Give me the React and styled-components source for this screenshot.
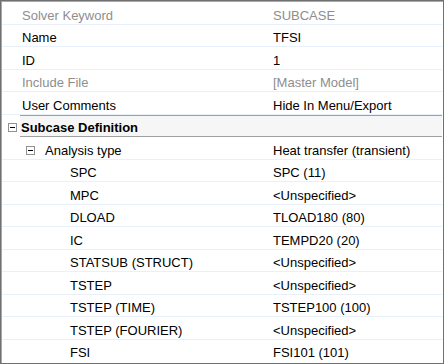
import styled, { createGlobalStyle } from "styled-components";

const Global = createGlobalStyle`
  html, body {
    margin: 0;
    padding: 0;
    background: #fff;
  }
  * {
    box-sizing: border-box;
  }
`;

const Panel = styled.div`
  width: 444px;
  height: 364px;
  border: 1px solid #707070;
  box-shadow: inset 1px 1px 0 #a8a8a8;
  padding: 1px 1px 0 1px;
  overflow: hidden;
  background: #fff;
  font-family: "Liberation Sans", Arial, sans-serif;
  font-size: 13px;
  color: #000;
`;

const Row = styled.div`
  display: grid;
  grid-template-columns: 270px 1fr;
  align-items: center;
  height: 22.5px;
  padding-top: 5px;
  border-bottom: 1px solid ${({ $last }) => ($last ? "transparent" : "#e8f1fb")};
  color: ${({ $muted }) => ($muted ? "#8e8e8e" : "#000")};
  white-space: nowrap;
`;

const Label = styled.div`
  display: flex;
  align-items: center;
  padding-left: ${({ $indent }) => $indent}px;
  gap: 10px;
`;

const Value = styled.div`
  padding-left: 1px;
`;

const SectionRow = styled.div`
  display: flex;
  align-items: center;
  height: 22.5px;
`;

const SectionToggle = styled.div`
  width: 18px;
  display: flex;
  justify-content: center;
  padding-left: 2px;
  padding-top: 3px;
`;

const SectionBar = styled.div`
  flex: 1;
  height: 100%;
  display: flex;
  align-items: center;
  padding: 4px 0 0 1px;
  border-top: 1px solid #a0a0a0;
  border-bottom: 1px solid #a0a0a0;
  background: #f6f6f6;
  font-weight: bold;
`;

const Minus = () => (
  <svg width="9" height="9" viewBox="0 0 9 9" style={{ display: "block" }}>
    <rect x="0.5" y="0.5" width="8" height="8" fill="#fff" stroke="#919191" />
    <line x1="2" y1="4.5" x2="7" y2="4.5" stroke="#000" />
  </svg>
);

const topRows = [
  { label: "Solver Keyword", value: "SUBCASE", muted: true },
  { label: "Name", value: "TFSI" },
  { label: "ID", value: "1" },
  { label: "Include File", value: "[Master Model]", muted: true },
  { label: "User Comments", value: "Hide In Menu/Export" },
];

const childRows = [
  ["SPC", "SPC (11)"],
  ["MPC", "<Unspecified>"],
  ["DLOAD", "TLOAD180 (80)"],
  ["IC", "TEMPD20 (20)"],
  ["STATSUB (STRUCT)", "<Unspecified>"],
  ["TSTEP", "<Unspecified>"],
  ["TSTEP (TIME)", "TSTEP100 (100)"],
  ["TSTEP (FOURIER)", "<Unspecified>"],
  ["FSI", "FSI101 (101)"],
];

export default function App() {
  return (
    <>
      <Global />
      <Panel>
        {topRows.map((r) => (
          <Row key={r.label} $muted={r.muted}>
            <Label $indent={20}>{r.label}</Label>
            <Value>{r.value}</Value>
          </Row>
        ))}
        <SectionRow>
          <SectionToggle>
            <Minus />
          </SectionToggle>
          <SectionBar>Subcase Definition</SectionBar>
        </SectionRow>
        <Row>
          <Label $indent={24}>
            <Minus />
            Analysis type
          </Label>
          <Value>Heat transfer (transient)</Value>
        </Row>
        {childRows.map(([label, value], i) => (
          <Row key={label} $last={i === childRows.length - 1}>
            <Label $indent={68}>{label}</Label>
            <Value>{value}</Value>
          </Row>
        ))}
      </Panel>
    </>
  );
}
